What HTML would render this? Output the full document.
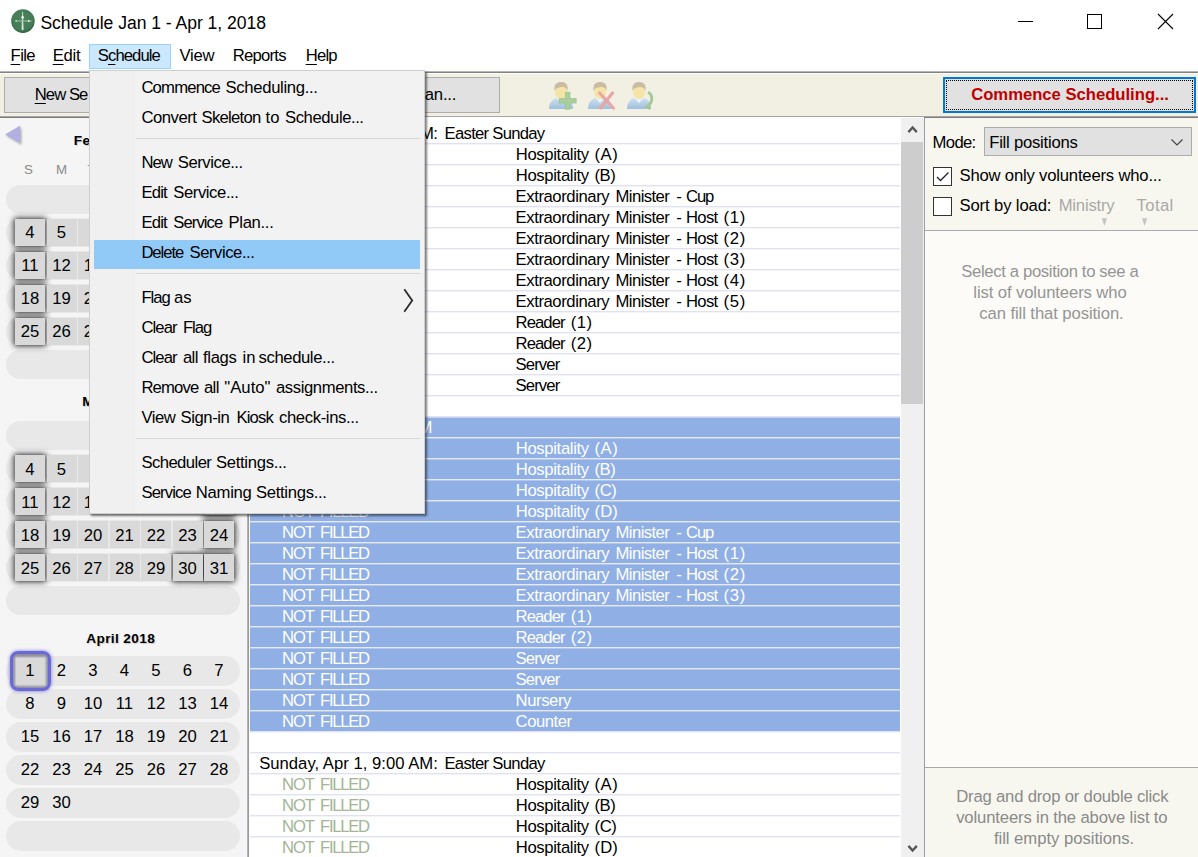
<!DOCTYPE html><html><head><meta charset="utf-8"><title>Schedule</title><style>
html,body{margin:0;padding:0;}
body{width:1198px;height:857px;overflow:hidden;background:#fff;font-family:"Liberation Sans", sans-serif;position:relative;}
div,span.t,svg{position:absolute;box-sizing:border-box;}
span.t{white-space:pre;}
u{text-decoration:underline;text-underline-offset:3px;text-decoration-thickness:1px;}
</style></head><body><div style="left:0px;top:0px;width:1198px;height:44px;background:#fff;"></div><svg style="left:10px;top:8px" width="26" height="26" viewBox="10 8 26 26">
<defs><radialGradient id="gi" cx="45%" cy="40%" r="60%"><stop offset="0" stop-color="#4a845c"/><stop offset="0.8" stop-color="#437b55"/><stop offset="1" stop-color="#2f6341"/></radialGradient></defs>
<circle cx="22.9" cy="21.1" r="11.8" fill="url(#gi)"/>
<path d="M22.6 11.8 L23.3 29.8 L21.9 29.8 Z" fill="#e4ece2" stroke="#e4ece2" stroke-width="0.5"/>
<path d="M15.2 21 H31.6" stroke="#a9c4ae" stroke-width="0.9" fill="none"/>
<circle cx="22.6" cy="17.3" r="1.25" fill="#fff"/>
<circle cx="16.2" cy="21" r="0.8" fill="#dce8dc"/><circle cx="28.7" cy="21" r="0.9" fill="#f0f5ee"/>
</svg><span class="t" style="left:40.40px;top:13px;font-size:17.6px;line-height:21px;color:#000;letter-spacing:-0.050px;">Schedule Jan 1 - Apr 1, 2018</span><svg style="left:1000px;top:0" width="198" height="44" viewBox="0 0 198 44" shape-rendering="crispEdges">
<path d="M18 21.5 H33" stroke="#000" stroke-width="1" fill="none"/>
<rect x="87.5" y="14.5" width="14" height="14" stroke="#000" stroke-width="1" fill="none"/>
<path d="M158 14 L173 29 M173 14 L158 29" stroke="#000" stroke-width="1.1" fill="none" shape-rendering="geometricPrecision"/>
</svg><div style="left:89px;top:44px;width:82px;height:25px;background:#cce8ff;border:1px solid #99d1ff;"></div><span class="t" style="left:10.60px;top:46px;font-size:16.67px;line-height:20px;color:#000;letter-spacing:-0.648px;"><u>F</u>ile</span><span class="t" style="left:52.70px;top:46px;font-size:16.67px;line-height:20px;color:#000;letter-spacing:-0.268px;"><u>E</u>dit</span><span class="t" style="left:97.80px;top:46px;font-size:16.67px;line-height:20px;color:#000;letter-spacing:-0.924px;">S<u>c</u>hedule</span><span class="t" style="left:179.50px;top:46px;font-size:16.67px;line-height:20px;color:#000;letter-spacing:-0.238px;">View</span><span class="t" style="left:232.70px;top:46px;font-size:16.67px;line-height:20px;color:#000;letter-spacing:-0.738px;">Reports</span><span class="t" style="left:305.70px;top:46px;font-size:16.67px;line-height:20px;color:#000;letter-spacing:-0.789px;"><u>H</u>elp</span><div style="left:0px;top:73px;width:1198px;height:45px;background:#f2f0e3;"></div><div style="left:0px;top:71px;width:1198px;height:1px;background:#b4b4b4;"></div><div style="left:0px;top:72px;width:1198px;height:1px;background:#828282;"></div><div style="left:0px;top:73px;width:1198px;height:1px;background:#fefefc;"></div><div style="left:0px;top:116px;width:1198px;height:1px;background:#a6a6a6;"></div><div style="left:0px;top:117px;width:1198px;height:1px;background:#7c7c7c;"></div><div style="left:4px;top:77px;width:166px;height:36px;background:#e1e1e1;border:1px solid #adadad;"></div><div style="left:169px;top:77px;width:166px;height:36px;background:#e1e1e1;border:1px solid #adadad;"></div><div style="left:334px;top:77px;width:166px;height:36px;background:#e1e1e1;border:1px solid #adadad;"></div><span class="t" style="left:34.70px;top:85px;font-size:16.67px;line-height:20px;color:#000;letter-spacing:-0.926px;"><u>N</u>ew Se</span><span class="t" style="left:202.20px;top:85px;font-size:16.67px;line-height:20px;color:#000;letter-spacing:-0.312px;"><u>E</u>dit Service...</span><span class="t" style="left:378.00px;top:85px;font-size:16.67px;line-height:20px;color:#000;letter-spacing:-0.197px;">Edit Plan...</span><svg style="left:548px;top:80px" width="36" height="32" viewBox="0 0 36 32">
<defs><linearGradient id="sh548" x1="0" y1="0" x2="0" y2="1"><stop offset="0" stop-color="#cfe0ee"/><stop offset="1" stop-color="#9fc0de"/></linearGradient></defs>
<path d="M1 29 C1 21 6 18.5 9 18 L17 18 C21 18.5 25 21 25 29 Z" fill="url(#sh548)"/>
<path d="M8.5 18 L13 23 L17.5 18 Z" fill="#eef3f6"/>
<ellipse cx="13" cy="12" rx="6" ry="7.2" fill="#f6e3a6"/>
<path d="M6.5 11 C5.5 4 9 2 13 2 C18 2 20.5 5 19.5 11 C18.5 7.5 16 6.5 13.5 7 C10 7.5 8 8 6.5 11 Z" fill="#c9bca2"/>
<path d="M17 17.2 H23.2 V11 H27.8 V17.2 H34 V21.8 H27.8 V28 H23.2 V21.8 H17 Z" fill="#a9cf9c" stroke="#8fbf84" stroke-width="0.6" transform="translate(-5.8,1.3)"/></svg><svg style="left:587px;top:80px" width="36" height="32" viewBox="0 0 36 32">
<defs><linearGradient id="sh587" x1="0" y1="0" x2="0" y2="1"><stop offset="0" stop-color="#cfe0ee"/><stop offset="1" stop-color="#9fc0de"/></linearGradient></defs>
<path d="M1 29 C1 21 6 18.5 9 18 L17 18 C21 18.5 25 21 25 29 Z" fill="url(#sh587)"/>
<path d="M8.5 18 L13 23 L17.5 18 Z" fill="#eef3f6"/>
<ellipse cx="13" cy="12" rx="6" ry="7.2" fill="#f6e3a6"/>
<path d="M6.5 11 C5.5 4 9 2 13 2 C18 2 20.5 5 19.5 11 C18.5 7.5 16 6.5 13.5 7 C10 7.5 8 8 6.5 11 Z" fill="#c9bca2"/>
<path d="M12.5 13 L26.5 28 M25.5 13 L13.5 28" stroke="#eaa6a6" stroke-width="3.2" fill="none" stroke-linecap="round"/></svg><svg style="left:626px;top:80px" width="36" height="32" viewBox="0 0 36 32">
<defs><linearGradient id="sh626" x1="0" y1="0" x2="0" y2="1"><stop offset="0" stop-color="#cfe0ee"/><stop offset="1" stop-color="#9fc0de"/></linearGradient></defs>
<path d="M1 29 C1 21 6 18.5 9 18 L17 18 C21 18.5 25 21 25 29 Z" fill="url(#sh626)"/>
<path d="M8.5 18 L13 23 L17.5 18 Z" fill="#eef3f6"/>
<ellipse cx="13" cy="12" rx="6" ry="7.2" fill="#f6e3a6"/>
<path d="M6.5 11 C5.5 4 9 2 13 2 C18 2 20.5 5 19.5 11 C18.5 7.5 16 6.5 13.5 7 C10 7.5 8 8 6.5 11 Z" fill="#c9bca2"/>
<path d="M22.5 11 C28.5 13 29.5 24 21.5 27.5 L20.5 25 C25.5 22.5 25.5 15.5 21.5 13.5 Z" fill="#a3c99a"/><path d="M17.5 27 L24.5 24.5 L24 30 Z" fill="#a3c99a"/></svg><div style="left:943px;top:77px;width:253px;height:36px;background:#e1e1e1;border:2px solid #0078d7;"></div><div style="left:946px;top:80px;width:247px;height:30px;border:1px dotted #000;"></div><span class="t" style="left:971.20px;top:85px;font-size:16.67px;line-height:20px;color:#c00000;font-weight:bold;letter-spacing:-0.017px;">Commence Scheduling...</span><div style="left:0px;top:118px;width:247px;height:739px;background:#f5f5f5;"></div><svg style="left:0px;top:120px" width="30" height="32" viewBox="0 0 30 32">
<defs><filter id="tb" x="-30%" y="-30%" width="160%" height="160%"><feGaussianBlur stdDeviation="1"/></filter></defs>
<path d="M6.5 16 L21.5 8 V25 Z" fill="#555" opacity="0.45" filter="url(#tb)"/>
<path d="M5 14.6 L20.2 5.4 V23 Z" fill="#b2b0e3"/></svg><span class="t" style="left:73.80px;top:133px;font-size:13.6px;line-height:16px;color:#000;font-weight:bold;letter-spacing:0.516px;text-shadow:1px 1px 1px rgba(0,0,0,0.18);">February 2018</span><span class="t" style="left:24.06px;top:162px;font-size:13.3px;line-height:16px;color:#8a8a8a;">S</span><span class="t" style="left:55.96px;top:162px;font-size:13.3px;line-height:16px;color:#8a8a8a;">M</span><span class="t" style="left:87.44px;top:162px;font-size:13.3px;line-height:16px;color:#8a8a8a;">T</span><span class="t" style="left:116.72px;top:162px;font-size:13.3px;line-height:16px;color:#8a8a8a;">W</span><span class="t" style="left:150.44px;top:162px;font-size:13.3px;line-height:16px;color:#8a8a8a;">T</span><span class="t" style="left:181.94px;top:162px;font-size:13.3px;line-height:16px;color:#8a8a8a;">F</span><span class="t" style="left:213.06px;top:162px;font-size:13.3px;line-height:16px;color:#8a8a8a;">S</span><div style="left:6px;top:184.9px;width:234px;height:29.5px;background:#e8e8e8;border-radius:15px;"></div><div style="left:6px;top:217.9px;width:234px;height:29.5px;background:#e8e8e8;border-radius:15px;"></div><div style="left:6px;top:250.9px;width:234px;height:29.5px;background:#e8e8e8;border-radius:15px;"></div><div style="left:6px;top:283.9px;width:234px;height:29.5px;background:#e8e8e8;border-radius:15px;"></div><div style="left:6px;top:316.9px;width:234px;height:29.5px;background:#e8e8e8;border-radius:15px;"></div><div style="left:6px;top:349.9px;width:234px;height:29.5px;background:#e8e8e8;border-radius:15px;"></div><div style="left:204.0px;top:186.4px;width:30px;height:27px;box-shadow:0 0 6px 1px rgba(0,0,0,0.8);background:#777;"></div><div style="left:15.0px;top:219.4px;width:30px;height:27px;box-shadow:0 0 6px 1px rgba(0,0,0,0.8);background:#777;"></div><div style="left:204.0px;top:219.4px;width:30px;height:27px;box-shadow:0 0 6px 1px rgba(0,0,0,0.8);background:#777;"></div><div style="left:15.0px;top:252.4px;width:30px;height:27px;box-shadow:0 0 6px 1px rgba(0,0,0,0.8);background:#777;"></div><div style="left:204.0px;top:252.4px;width:30px;height:27px;box-shadow:0 0 6px 1px rgba(0,0,0,0.8);background:#777;"></div><div style="left:15.0px;top:285.4px;width:30px;height:27px;box-shadow:0 0 6px 1px rgba(0,0,0,0.8);background:#777;"></div><div style="left:204.0px;top:285.4px;width:30px;height:27px;box-shadow:0 0 6px 1px rgba(0,0,0,0.8);background:#777;"></div><div style="left:15.0px;top:318.4px;width:30px;height:27px;box-shadow:0 0 6px 1px rgba(0,0,0,0.8);background:#777;"></div><div style="left:141.0px;top:186.4px;width:30px;height:27px;background:#d9d9d9;"></div><div style="left:172.5px;top:186.4px;width:30px;height:27px;background:#d9d9d9;"></div><div style="left:204.0px;top:186.4px;width:30px;height:27px;background:#d9d9d9;"></div><div style="left:15.0px;top:219.4px;width:30px;height:27px;background:#d9d9d9;"></div><span class="t" style="left:25.37px;top:223px;font-size:16.67px;line-height:20px;color:#000;">4</span><div style="left:46.5px;top:219.4px;width:30px;height:27px;background:#d9d9d9;"></div><span class="t" style="left:56.87px;top:223px;font-size:16.67px;line-height:20px;color:#000;">5</span><div style="left:78.0px;top:219.4px;width:30px;height:27px;background:#d9d9d9;"></div><div style="left:109.5px;top:219.4px;width:30px;height:27px;background:#d9d9d9;"></div><div style="left:141.0px;top:219.4px;width:30px;height:27px;background:#d9d9d9;"></div><div style="left:172.5px;top:219.4px;width:30px;height:27px;background:#d9d9d9;"></div><div style="left:204.0px;top:219.4px;width:30px;height:27px;background:#d9d9d9;"></div><div style="left:15.0px;top:252.4px;width:30px;height:27px;background:#d9d9d9;"></div><span class="t" style="left:21.35px;top:256px;font-size:16.67px;line-height:20px;color:#000;">11</span><div style="left:46.5px;top:252.4px;width:30px;height:27px;background:#d9d9d9;"></div><span class="t" style="left:52.23px;top:256px;font-size:16.67px;line-height:20px;color:#000;">12</span><div style="left:78.0px;top:252.4px;width:30px;height:27px;background:#d9d9d9;"></div><span class="t" style="left:83.73px;top:256px;font-size:16.67px;line-height:20px;color:#000;">13</span><div style="left:109.5px;top:252.4px;width:30px;height:27px;background:#d9d9d9;"></div><div style="left:141.0px;top:252.4px;width:30px;height:27px;background:#d9d9d9;"></div><div style="left:172.5px;top:252.4px;width:30px;height:27px;background:#d9d9d9;"></div><div style="left:204.0px;top:252.4px;width:30px;height:27px;background:#d9d9d9;"></div><div style="left:15.0px;top:285.4px;width:30px;height:27px;background:#d9d9d9;"></div><span class="t" style="left:20.73px;top:289px;font-size:16.67px;line-height:20px;color:#000;">18</span><div style="left:46.5px;top:285.4px;width:30px;height:27px;background:#d9d9d9;"></div><span class="t" style="left:52.23px;top:289px;font-size:16.67px;line-height:20px;color:#000;">19</span><div style="left:78.0px;top:285.4px;width:30px;height:27px;background:#d9d9d9;"></div><span class="t" style="left:83.73px;top:289px;font-size:16.67px;line-height:20px;color:#000;">20</span><div style="left:109.5px;top:285.4px;width:30px;height:27px;background:#d9d9d9;"></div><div style="left:141.0px;top:285.4px;width:30px;height:27px;background:#d9d9d9;"></div><div style="left:172.5px;top:285.4px;width:30px;height:27px;background:#d9d9d9;"></div><div style="left:204.0px;top:285.4px;width:30px;height:27px;background:#d9d9d9;"></div><div style="left:15.0px;top:318.4px;width:30px;height:27px;background:#d9d9d9;"></div><span class="t" style="left:20.73px;top:322px;font-size:16.67px;line-height:20px;color:#000;">25</span><div style="left:46.5px;top:318.4px;width:30px;height:27px;background:#d9d9d9;"></div><span class="t" style="left:52.23px;top:322px;font-size:16.67px;line-height:20px;color:#000;">26</span><div style="left:78.0px;top:318.4px;width:30px;height:27px;background:#d9d9d9;"></div><span class="t" style="left:83.73px;top:322px;font-size:16.67px;line-height:20px;color:#000;">27</span><div style="left:109.5px;top:318.4px;width:30px;height:27px;background:#d9d9d9;"></div><span class="t" style="left:82.30px;top:394px;font-size:13.6px;line-height:16px;color:#000;font-weight:bold;letter-spacing:0.371px;text-shadow:1px 1px 1px rgba(0,0,0,0.18);">March 2018</span><div style="left:6px;top:420.8px;width:234px;height:29.5px;background:#e8e8e8;border-radius:15px;"></div><div style="left:6px;top:453.8px;width:234px;height:29.5px;background:#e8e8e8;border-radius:15px;"></div><div style="left:6px;top:486.8px;width:234px;height:29.5px;background:#e8e8e8;border-radius:15px;"></div><div style="left:6px;top:519.8px;width:234px;height:29.5px;background:#e8e8e8;border-radius:15px;"></div><div style="left:6px;top:552.8px;width:234px;height:29.5px;background:#e8e8e8;border-radius:15px;"></div><div style="left:6px;top:585.8px;width:234px;height:29.5px;background:#e8e8e8;border-radius:15px;"></div><div style="left:204.0px;top:422.3px;width:30px;height:27px;box-shadow:0 0 6px 1px rgba(0,0,0,0.8);background:#777;"></div><div style="left:15.0px;top:455.3px;width:30px;height:27px;box-shadow:0 0 6px 1px rgba(0,0,0,0.8);background:#777;"></div><div style="left:204.0px;top:455.3px;width:30px;height:27px;box-shadow:0 0 6px 1px rgba(0,0,0,0.8);background:#777;"></div><div style="left:15.0px;top:488.3px;width:30px;height:27px;box-shadow:0 0 6px 1px rgba(0,0,0,0.8);background:#777;"></div><div style="left:204.0px;top:488.3px;width:30px;height:27px;box-shadow:0 0 6px 1px rgba(0,0,0,0.8);background:#777;"></div><div style="left:15.0px;top:521.3px;width:30px;height:27px;box-shadow:0 0 6px 1px rgba(0,0,0,0.8);background:#777;"></div><div style="left:204.0px;top:521.3px;width:30px;height:27px;box-shadow:0 0 6px 1px rgba(0,0,0,0.8);background:#777;"></div><div style="left:15.0px;top:554.3px;width:30px;height:27px;box-shadow:0 0 6px 1px rgba(0,0,0,0.8);background:#777;"></div><div style="left:172.5px;top:554.3px;width:30px;height:27px;box-shadow:0 0 6px 1px rgba(0,0,0,0.8);background:#777;"></div><div style="left:204.0px;top:554.3px;width:30px;height:27px;box-shadow:0 0 6px 1px rgba(0,0,0,0.8);background:#777;"></div><div style="left:141.0px;top:422.3px;width:30px;height:27px;background:#d9d9d9;"></div><div style="left:172.5px;top:422.3px;width:30px;height:27px;background:#d9d9d9;"></div><div style="left:204.0px;top:422.3px;width:30px;height:27px;background:#d9d9d9;"></div><div style="left:15.0px;top:455.3px;width:30px;height:27px;background:#d9d9d9;"></div><span class="t" style="left:25.37px;top:460px;font-size:16.67px;line-height:20px;color:#000;">4</span><div style="left:46.5px;top:455.3px;width:30px;height:27px;background:#d9d9d9;"></div><span class="t" style="left:56.87px;top:460px;font-size:16.67px;line-height:20px;color:#000;">5</span><div style="left:78.0px;top:455.3px;width:30px;height:27px;background:#d9d9d9;"></div><div style="left:109.5px;top:455.3px;width:30px;height:27px;background:#d9d9d9;"></div><div style="left:141.0px;top:455.3px;width:30px;height:27px;background:#d9d9d9;"></div><div style="left:172.5px;top:455.3px;width:30px;height:27px;background:#d9d9d9;"></div><div style="left:204.0px;top:455.3px;width:30px;height:27px;background:#d9d9d9;"></div><div style="left:15.0px;top:488.3px;width:30px;height:27px;background:#d9d9d9;"></div><span class="t" style="left:21.35px;top:493px;font-size:16.67px;line-height:20px;color:#000;">11</span><div style="left:46.5px;top:488.3px;width:30px;height:27px;background:#d9d9d9;"></div><span class="t" style="left:52.23px;top:493px;font-size:16.67px;line-height:20px;color:#000;">12</span><div style="left:78.0px;top:488.3px;width:30px;height:27px;background:#d9d9d9;"></div><span class="t" style="left:83.73px;top:493px;font-size:16.67px;line-height:20px;color:#000;">13</span><div style="left:109.5px;top:488.3px;width:30px;height:27px;background:#d9d9d9;"></div><div style="left:141.0px;top:488.3px;width:30px;height:27px;background:#d9d9d9;"></div><div style="left:172.5px;top:488.3px;width:30px;height:27px;background:#d9d9d9;"></div><div style="left:204.0px;top:488.3px;width:30px;height:27px;background:#d9d9d9;"></div><div style="left:15.0px;top:521.3px;width:30px;height:27px;background:#d9d9d9;"></div><span class="t" style="left:20.73px;top:526px;font-size:16.67px;line-height:20px;color:#000;">18</span><div style="left:46.5px;top:521.3px;width:30px;height:27px;background:#d9d9d9;"></div><span class="t" style="left:52.23px;top:526px;font-size:16.67px;line-height:20px;color:#000;">19</span><div style="left:78.0px;top:521.3px;width:30px;height:27px;background:#d9d9d9;"></div><span class="t" style="left:83.73px;top:526px;font-size:16.67px;line-height:20px;color:#000;">20</span><div style="left:109.5px;top:521.3px;width:30px;height:27px;background:#d9d9d9;"></div><span class="t" style="left:115.23px;top:526px;font-size:16.67px;line-height:20px;color:#000;">21</span><div style="left:141.0px;top:521.3px;width:30px;height:27px;background:#d9d9d9;"></div><span class="t" style="left:146.73px;top:526px;font-size:16.67px;line-height:20px;color:#000;">22</span><div style="left:172.5px;top:521.3px;width:30px;height:27px;background:#d9d9d9;"></div><span class="t" style="left:178.23px;top:526px;font-size:16.67px;line-height:20px;color:#000;">23</span><div style="left:204.0px;top:521.3px;width:30px;height:27px;background:#d9d9d9;"></div><span class="t" style="left:209.73px;top:526px;font-size:16.67px;line-height:20px;color:#000;">24</span><div style="left:15.0px;top:554.3px;width:30px;height:27px;background:#d9d9d9;"></div><span class="t" style="left:20.73px;top:559px;font-size:16.67px;line-height:20px;color:#000;">25</span><div style="left:46.5px;top:554.3px;width:30px;height:27px;background:#d9d9d9;"></div><span class="t" style="left:52.23px;top:559px;font-size:16.67px;line-height:20px;color:#000;">26</span><div style="left:78.0px;top:554.3px;width:30px;height:27px;background:#d9d9d9;"></div><span class="t" style="left:83.73px;top:559px;font-size:16.67px;line-height:20px;color:#000;">27</span><div style="left:109.5px;top:554.3px;width:30px;height:27px;background:#d9d9d9;"></div><span class="t" style="left:115.23px;top:559px;font-size:16.67px;line-height:20px;color:#000;">28</span><div style="left:141.0px;top:554.3px;width:30px;height:27px;background:#d9d9d9;"></div><span class="t" style="left:146.73px;top:559px;font-size:16.67px;line-height:20px;color:#000;">29</span><div style="left:172.5px;top:554.3px;width:30px;height:27px;background:#d9d9d9;"></div><span class="t" style="left:178.23px;top:559px;font-size:16.67px;line-height:20px;color:#000;">30</span><div style="left:204.0px;top:554.3px;width:30px;height:27px;background:#d9d9d9;"></div><span class="t" style="left:209.73px;top:559px;font-size:16.67px;line-height:20px;color:#000;">31</span><span class="t" style="left:86.30px;top:631px;font-size:13.6px;line-height:16px;color:#000;font-weight:bold;letter-spacing:0.380px;text-shadow:1px 1px 1px rgba(0,0,0,0.18);">April 2018</span><div style="left:6px;top:656.2px;width:234px;height:29.5px;background:#e8e8e8;border-radius:15px;"></div><div style="left:6px;top:689.2px;width:234px;height:29.5px;background:#e8e8e8;border-radius:15px;"></div><div style="left:6px;top:722.2px;width:234px;height:29.5px;background:#e8e8e8;border-radius:15px;"></div><div style="left:6px;top:755.2px;width:234px;height:29.5px;background:#e8e8e8;border-radius:15px;"></div><div style="left:6px;top:788.2px;width:234px;height:29.5px;background:#e8e8e8;border-radius:15px;"></div><div style="left:6px;top:821.2px;width:234px;height:29.5px;background:#e8e8e8;border-radius:15px;"></div><div style="left:11.0px;top:653.2px;width:38px;height:35.5px;overflow:hidden;border-radius:7px;background:#8d8d9e;"><div style="left:5px;top:4.5px;width:28px;height:26.5px;background:#d9d9d9;box-shadow:0 0 2px 1.5px #d9d9d9;"></div></div><div style="left:9.5px;top:651.4000000000001px;width:41px;height:39.2px;border:3.2px solid #6b69d6;border-radius:8px;box-shadow:0 0 3px 1px rgba(107,105,214,0.55);"></div><span class="t" style="left:25.37px;top:661px;font-size:16.67px;line-height:20px;color:#000;">1</span><span class="t" style="left:56.87px;top:661px;font-size:16.67px;line-height:20px;color:#000;">2</span><span class="t" style="left:88.37px;top:661px;font-size:16.67px;line-height:20px;color:#000;">3</span><span class="t" style="left:119.87px;top:661px;font-size:16.67px;line-height:20px;color:#000;">4</span><span class="t" style="left:151.37px;top:661px;font-size:16.67px;line-height:20px;color:#000;">5</span><span class="t" style="left:182.87px;top:661px;font-size:16.67px;line-height:20px;color:#000;">6</span><span class="t" style="left:214.37px;top:661px;font-size:16.67px;line-height:20px;color:#000;">7</span><span class="t" style="left:25.37px;top:694px;font-size:16.67px;line-height:20px;color:#000;">8</span><span class="t" style="left:56.87px;top:694px;font-size:16.67px;line-height:20px;color:#000;">9</span><span class="t" style="left:83.73px;top:694px;font-size:16.67px;line-height:20px;color:#000;">10</span><span class="t" style="left:115.85px;top:694px;font-size:16.67px;line-height:20px;color:#000;">11</span><span class="t" style="left:146.73px;top:694px;font-size:16.67px;line-height:20px;color:#000;">12</span><span class="t" style="left:178.23px;top:694px;font-size:16.67px;line-height:20px;color:#000;">13</span><span class="t" style="left:209.73px;top:694px;font-size:16.67px;line-height:20px;color:#000;">14</span><span class="t" style="left:20.73px;top:727px;font-size:16.67px;line-height:20px;color:#000;">15</span><span class="t" style="left:52.23px;top:727px;font-size:16.67px;line-height:20px;color:#000;">16</span><span class="t" style="left:83.73px;top:727px;font-size:16.67px;line-height:20px;color:#000;">17</span><span class="t" style="left:115.23px;top:727px;font-size:16.67px;line-height:20px;color:#000;">18</span><span class="t" style="left:146.73px;top:727px;font-size:16.67px;line-height:20px;color:#000;">19</span><span class="t" style="left:178.23px;top:727px;font-size:16.67px;line-height:20px;color:#000;">20</span><span class="t" style="left:209.73px;top:727px;font-size:16.67px;line-height:20px;color:#000;">21</span><span class="t" style="left:20.73px;top:760px;font-size:16.67px;line-height:20px;color:#000;">22</span><span class="t" style="left:52.23px;top:760px;font-size:16.67px;line-height:20px;color:#000;">23</span><span class="t" style="left:83.73px;top:760px;font-size:16.67px;line-height:20px;color:#000;">24</span><span class="t" style="left:115.23px;top:760px;font-size:16.67px;line-height:20px;color:#000;">25</span><span class="t" style="left:146.73px;top:760px;font-size:16.67px;line-height:20px;color:#000;">26</span><span class="t" style="left:178.23px;top:760px;font-size:16.67px;line-height:20px;color:#000;">27</span><span class="t" style="left:209.73px;top:760px;font-size:16.67px;line-height:20px;color:#000;">28</span><span class="t" style="left:20.73px;top:793px;font-size:16.67px;line-height:20px;color:#000;">29</span><span class="t" style="left:52.23px;top:793px;font-size:16.67px;line-height:20px;color:#000;">30</span><div style="left:247px;top:118px;width:1px;height:739px;background:#b2b2ba;"></div><div style="left:248px;top:118px;width:1px;height:739px;background:#9a9aa3;"></div><div style="left:249px;top:117px;width:675px;height:740px;background:#fff;"></div><div style="left:249px;top:118px;width:1px;height:739px;background:#fbfaf5;"></div><div style="left:250px;top:417px;width:650px;height:314px;background:#90afe5;"></div><div style="left:250px;top:143px;width:650px;height:1px;background:#e1e1f3;"></div><div style="left:250px;top:144px;width:650px;height:1px;background:#f3f3fa;"></div><div style="left:250px;top:164px;width:650px;height:1px;background:#e1e1f3;"></div><div style="left:250px;top:165px;width:650px;height:1px;background:#f3f3fa;"></div><div style="left:250px;top:185px;width:650px;height:1px;background:#e1e1f3;"></div><div style="left:250px;top:186px;width:650px;height:1px;background:#f3f3fa;"></div><div style="left:250px;top:206px;width:650px;height:1px;background:#e1e1f3;"></div><div style="left:250px;top:207px;width:650px;height:1px;background:#f3f3fa;"></div><div style="left:250px;top:227px;width:650px;height:1px;background:#e1e1f3;"></div><div style="left:250px;top:228px;width:650px;height:1px;background:#f3f3fa;"></div><div style="left:250px;top:248px;width:650px;height:1px;background:#e1e1f3;"></div><div style="left:250px;top:249px;width:650px;height:1px;background:#f3f3fa;"></div><div style="left:250px;top:269px;width:650px;height:1px;background:#e1e1f3;"></div><div style="left:250px;top:270px;width:650px;height:1px;background:#f3f3fa;"></div><div style="left:250px;top:290px;width:650px;height:1px;background:#e1e1f3;"></div><div style="left:250px;top:291px;width:650px;height:1px;background:#f3f3fa;"></div><div style="left:250px;top:311px;width:650px;height:1px;background:#e1e1f3;"></div><div style="left:250px;top:312px;width:650px;height:1px;background:#f3f3fa;"></div><div style="left:250px;top:332px;width:650px;height:1px;background:#e1e1f3;"></div><div style="left:250px;top:333px;width:650px;height:1px;background:#f3f3fa;"></div><div style="left:250px;top:353px;width:650px;height:1px;background:#e1e1f3;"></div><div style="left:250px;top:354px;width:650px;height:1px;background:#f3f3fa;"></div><div style="left:250px;top:374px;width:650px;height:1px;background:#e1e1f3;"></div><div style="left:250px;top:375px;width:650px;height:1px;background:#f3f3fa;"></div><div style="left:250px;top:395px;width:650px;height:1px;background:#e1e1f3;"></div><div style="left:250px;top:396px;width:650px;height:1px;background:#f3f3fa;"></div><div style="left:250px;top:416px;width:650px;height:1px;background:#e1e1f3;"></div><div style="left:250px;top:417px;width:650px;height:1px;background:#c6d3f1;"></div><div style="left:250px;top:437px;width:650px;height:1px;background:#e6e9f8;"></div><div style="left:250px;top:438px;width:650px;height:1px;background:#b3c6ec;"></div><div style="left:250px;top:458px;width:650px;height:1px;background:#e6e9f8;"></div><div style="left:250px;top:459px;width:650px;height:1px;background:#b3c6ec;"></div><div style="left:250px;top:479px;width:650px;height:1px;background:#e6e9f8;"></div><div style="left:250px;top:480px;width:650px;height:1px;background:#b3c6ec;"></div><div style="left:250px;top:500px;width:650px;height:1px;background:#e6e9f8;"></div><div style="left:250px;top:501px;width:650px;height:1px;background:#b3c6ec;"></div><div style="left:250px;top:521px;width:650px;height:1px;background:#e6e9f8;"></div><div style="left:250px;top:522px;width:650px;height:1px;background:#b3c6ec;"></div><div style="left:250px;top:542px;width:650px;height:1px;background:#e6e9f8;"></div><div style="left:250px;top:543px;width:650px;height:1px;background:#b3c6ec;"></div><div style="left:250px;top:563px;width:650px;height:1px;background:#e6e9f8;"></div><div style="left:250px;top:564px;width:650px;height:1px;background:#b3c6ec;"></div><div style="left:250px;top:584px;width:650px;height:1px;background:#e6e9f8;"></div><div style="left:250px;top:585px;width:650px;height:1px;background:#b3c6ec;"></div><div style="left:250px;top:605px;width:650px;height:1px;background:#e6e9f8;"></div><div style="left:250px;top:606px;width:650px;height:1px;background:#b3c6ec;"></div><div style="left:250px;top:626px;width:650px;height:1px;background:#e6e9f8;"></div><div style="left:250px;top:627px;width:650px;height:1px;background:#b3c6ec;"></div><div style="left:250px;top:647px;width:650px;height:1px;background:#e6e9f8;"></div><div style="left:250px;top:648px;width:650px;height:1px;background:#b3c6ec;"></div><div style="left:250px;top:668px;width:650px;height:1px;background:#e6e9f8;"></div><div style="left:250px;top:669px;width:650px;height:1px;background:#b3c6ec;"></div><div style="left:250px;top:689px;width:650px;height:1px;background:#e6e9f8;"></div><div style="left:250px;top:690px;width:650px;height:1px;background:#b3c6ec;"></div><div style="left:250px;top:710px;width:650px;height:1px;background:#e6e9f8;"></div><div style="left:250px;top:711px;width:650px;height:1px;background:#b3c6ec;"></div><div style="left:250px;top:731px;width:650px;height:1px;background:#e1e1f3;"></div><div style="left:250px;top:732px;width:650px;height:1px;background:#f3f3fa;"></div><div style="left:250px;top:752px;width:650px;height:1px;background:#e1e1f3;"></div><div style="left:250px;top:753px;width:650px;height:1px;background:#f3f3fa;"></div><div style="left:250px;top:773px;width:650px;height:1px;background:#e1e1f3;"></div><div style="left:250px;top:774px;width:650px;height:1px;background:#f3f3fa;"></div><div style="left:250px;top:794px;width:650px;height:1px;background:#e1e1f3;"></div><div style="left:250px;top:795px;width:650px;height:1px;background:#f3f3fa;"></div><div style="left:250px;top:815px;width:650px;height:1px;background:#e1e1f3;"></div><div style="left:250px;top:816px;width:650px;height:1px;background:#f3f3fa;"></div><div style="left:250px;top:836px;width:650px;height:1px;background:#e1e1f3;"></div><div style="left:250px;top:837px;width:650px;height:1px;background:#f3f3fa;"></div><span class="t" style="left:420.00px;top:124px;font-size:16.67px;line-height:20px;color:#000;letter-spacing:-0.716px;">M:</span><span class="t" style="left:444.60px;top:124px;font-size:16.67px;line-height:20px;color:#000;letter-spacing:-0.722px;">Easter Sunday</span><span class="t" style="left:281.90px;top:145px;font-size:16.67px;line-height:20px;color:#a3b596;letter-spacing:-1.036px;">NOT</span><span class="t" style="left:320.00px;top:145px;font-size:16.67px;line-height:20px;color:#a3b596;letter-spacing:-1.274px;">FILLED</span><span class="t" style="left:515.70px;top:145px;font-size:16.67px;line-height:20px;color:#000;letter-spacing:-0.334px;">Hospitality</span><span class="t" style="left:594.50px;top:145px;font-size:16.67px;line-height:20px;color:#000;letter-spacing:0.548px;">(A)</span><span class="t" style="left:281.90px;top:166px;font-size:16.67px;line-height:20px;color:#a3b596;letter-spacing:-1.036px;">NOT</span><span class="t" style="left:320.00px;top:166px;font-size:16.67px;line-height:20px;color:#a3b596;letter-spacing:-1.274px;">FILLED</span><span class="t" style="left:515.70px;top:166px;font-size:16.67px;line-height:20px;color:#000;letter-spacing:-0.334px;">Hospitality</span><span class="t" style="left:594.50px;top:166px;font-size:16.67px;line-height:20px;color:#000;letter-spacing:-0.452px;">(B)</span><span class="t" style="left:281.90px;top:187px;font-size:16.67px;line-height:20px;color:#a3b596;letter-spacing:-1.036px;">NOT</span><span class="t" style="left:320.00px;top:187px;font-size:16.67px;line-height:20px;color:#a3b596;letter-spacing:-1.274px;">FILLED</span><span class="t" style="left:515.60px;top:187px;font-size:16.67px;line-height:20px;color:#000;letter-spacing:-0.422px;">Extraordinary</span><span class="t" style="left:615.60px;top:187px;font-size:16.67px;line-height:20px;color:#000;letter-spacing:-0.602px;">Minister</span><span class="t" style="left:676.20px;top:187px;font-size:16.67px;line-height:20px;color:#000;">-</span><span class="t" style="left:686.00px;top:187px;font-size:16.67px;line-height:20px;color:#000;letter-spacing:-1.131px;">Cup</span><span class="t" style="left:281.90px;top:208px;font-size:16.67px;line-height:20px;color:#a3b596;letter-spacing:-1.036px;">NOT</span><span class="t" style="left:320.00px;top:208px;font-size:16.67px;line-height:20px;color:#a3b596;letter-spacing:-1.274px;">FILLED</span><span class="t" style="left:515.60px;top:208px;font-size:16.67px;line-height:20px;color:#000;letter-spacing:-0.422px;">Extraordinary</span><span class="t" style="left:615.60px;top:208px;font-size:16.67px;line-height:20px;color:#000;letter-spacing:-0.602px;">Minister</span><span class="t" style="left:676.20px;top:208px;font-size:16.67px;line-height:20px;color:#000;">-</span><span class="t" style="left:686.00px;top:208px;font-size:16.67px;line-height:20px;color:#000;letter-spacing:-0.683px;">Host</span><span class="t" style="left:723.50px;top:208px;font-size:16.67px;line-height:20px;color:#000;letter-spacing:0.670px;">(1)</span><span class="t" style="left:281.90px;top:229px;font-size:16.67px;line-height:20px;color:#a3b596;letter-spacing:-1.036px;">NOT</span><span class="t" style="left:320.00px;top:229px;font-size:16.67px;line-height:20px;color:#a3b596;letter-spacing:-1.274px;">FILLED</span><span class="t" style="left:515.60px;top:229px;font-size:16.67px;line-height:20px;color:#000;letter-spacing:-0.422px;">Extraordinary</span><span class="t" style="left:615.60px;top:229px;font-size:16.67px;line-height:20px;color:#000;letter-spacing:-0.602px;">Minister</span><span class="t" style="left:676.20px;top:229px;font-size:16.67px;line-height:20px;color:#000;">-</span><span class="t" style="left:686.00px;top:229px;font-size:16.67px;line-height:20px;color:#000;letter-spacing:-0.683px;">Host</span><span class="t" style="left:723.50px;top:229px;font-size:16.67px;line-height:20px;color:#000;letter-spacing:0.670px;">(2)</span><span class="t" style="left:281.90px;top:250px;font-size:16.67px;line-height:20px;color:#a3b596;letter-spacing:-1.036px;">NOT</span><span class="t" style="left:320.00px;top:250px;font-size:16.67px;line-height:20px;color:#a3b596;letter-spacing:-1.274px;">FILLED</span><span class="t" style="left:515.60px;top:250px;font-size:16.67px;line-height:20px;color:#000;letter-spacing:-0.422px;">Extraordinary</span><span class="t" style="left:615.60px;top:250px;font-size:16.67px;line-height:20px;color:#000;letter-spacing:-0.602px;">Minister</span><span class="t" style="left:676.20px;top:250px;font-size:16.67px;line-height:20px;color:#000;">-</span><span class="t" style="left:686.00px;top:250px;font-size:16.67px;line-height:20px;color:#000;letter-spacing:-0.683px;">Host</span><span class="t" style="left:723.50px;top:250px;font-size:16.67px;line-height:20px;color:#000;letter-spacing:0.670px;">(3)</span><span class="t" style="left:281.90px;top:271px;font-size:16.67px;line-height:20px;color:#a3b596;letter-spacing:-1.036px;">NOT</span><span class="t" style="left:320.00px;top:271px;font-size:16.67px;line-height:20px;color:#a3b596;letter-spacing:-1.274px;">FILLED</span><span class="t" style="left:515.60px;top:271px;font-size:16.67px;line-height:20px;color:#000;letter-spacing:-0.422px;">Extraordinary</span><span class="t" style="left:615.60px;top:271px;font-size:16.67px;line-height:20px;color:#000;letter-spacing:-0.602px;">Minister</span><span class="t" style="left:676.20px;top:271px;font-size:16.67px;line-height:20px;color:#000;">-</span><span class="t" style="left:686.00px;top:271px;font-size:16.67px;line-height:20px;color:#000;letter-spacing:-0.683px;">Host</span><span class="t" style="left:723.50px;top:271px;font-size:16.67px;line-height:20px;color:#000;letter-spacing:0.670px;">(4)</span><span class="t" style="left:281.90px;top:292px;font-size:16.67px;line-height:20px;color:#a3b596;letter-spacing:-1.036px;">NOT</span><span class="t" style="left:320.00px;top:292px;font-size:16.67px;line-height:20px;color:#a3b596;letter-spacing:-1.274px;">FILLED</span><span class="t" style="left:515.60px;top:292px;font-size:16.67px;line-height:20px;color:#000;letter-spacing:-0.422px;">Extraordinary</span><span class="t" style="left:615.60px;top:292px;font-size:16.67px;line-height:20px;color:#000;letter-spacing:-0.602px;">Minister</span><span class="t" style="left:676.20px;top:292px;font-size:16.67px;line-height:20px;color:#000;">-</span><span class="t" style="left:686.00px;top:292px;font-size:16.67px;line-height:20px;color:#000;letter-spacing:-0.683px;">Host</span><span class="t" style="left:723.50px;top:292px;font-size:16.67px;line-height:20px;color:#000;letter-spacing:0.670px;">(5)</span><span class="t" style="left:281.90px;top:313px;font-size:16.67px;line-height:20px;color:#a3b596;letter-spacing:-1.036px;">NOT</span><span class="t" style="left:320.00px;top:313px;font-size:16.67px;line-height:20px;color:#a3b596;letter-spacing:-1.274px;">FILLED</span><span class="t" style="left:515.60px;top:313px;font-size:16.67px;line-height:20px;color:#000;letter-spacing:-0.928px;">Reader</span><span class="t" style="left:570.80px;top:313px;font-size:16.67px;line-height:20px;color:#000;letter-spacing:0.420px;">(1)</span><span class="t" style="left:281.90px;top:334px;font-size:16.67px;line-height:20px;color:#a3b596;letter-spacing:-1.036px;">NOT</span><span class="t" style="left:320.00px;top:334px;font-size:16.67px;line-height:20px;color:#a3b596;letter-spacing:-1.274px;">FILLED</span><span class="t" style="left:515.60px;top:334px;font-size:16.67px;line-height:20px;color:#000;letter-spacing:-0.928px;">Reader</span><span class="t" style="left:570.80px;top:334px;font-size:16.67px;line-height:20px;color:#000;letter-spacing:0.420px;">(2)</span><span class="t" style="left:281.90px;top:355px;font-size:16.67px;line-height:20px;color:#a3b596;letter-spacing:-1.036px;">NOT</span><span class="t" style="left:320.00px;top:355px;font-size:16.67px;line-height:20px;color:#a3b596;letter-spacing:-1.274px;">FILLED</span><span class="t" style="left:515.60px;top:355px;font-size:16.67px;line-height:20px;color:#000;letter-spacing:-0.892px;">Server</span><span class="t" style="left:281.90px;top:376px;font-size:16.67px;line-height:20px;color:#a3b596;letter-spacing:-1.036px;">NOT</span><span class="t" style="left:320.00px;top:376px;font-size:16.67px;line-height:20px;color:#a3b596;letter-spacing:-1.274px;">FILLED</span><span class="t" style="left:515.60px;top:376px;font-size:16.67px;line-height:20px;color:#000;letter-spacing:-0.892px;">Server</span><span class="t" style="left:259.20px;top:418px;font-size:16.67px;line-height:20px;color:#fff;letter-spacing:-0.028px;">Sunday, Apr 1, 8:00 AM</span><span class="t" style="left:281.90px;top:439px;font-size:16.67px;line-height:20px;color:#fff;letter-spacing:-1.036px;">NOT</span><span class="t" style="left:320.00px;top:439px;font-size:16.67px;line-height:20px;color:#fff;letter-spacing:-1.274px;">FILLED</span><span class="t" style="left:515.70px;top:439px;font-size:16.67px;line-height:20px;color:#fff;letter-spacing:-0.334px;">Hospitality</span><span class="t" style="left:594.50px;top:439px;font-size:16.67px;line-height:20px;color:#fff;letter-spacing:0.548px;">(A)</span><span class="t" style="left:281.90px;top:460px;font-size:16.67px;line-height:20px;color:#fff;letter-spacing:-1.036px;">NOT</span><span class="t" style="left:320.00px;top:460px;font-size:16.67px;line-height:20px;color:#fff;letter-spacing:-1.274px;">FILLED</span><span class="t" style="left:515.70px;top:460px;font-size:16.67px;line-height:20px;color:#fff;letter-spacing:-0.334px;">Hospitality</span><span class="t" style="left:594.50px;top:460px;font-size:16.67px;line-height:20px;color:#fff;letter-spacing:-0.452px;">(B)</span><span class="t" style="left:281.90px;top:481px;font-size:16.67px;line-height:20px;color:#fff;letter-spacing:-1.036px;">NOT</span><span class="t" style="left:320.00px;top:481px;font-size:16.67px;line-height:20px;color:#fff;letter-spacing:-1.274px;">FILLED</span><span class="t" style="left:515.70px;top:481px;font-size:16.67px;line-height:20px;color:#fff;letter-spacing:-0.334px;">Hospitality</span><span class="t" style="left:594.50px;top:481px;font-size:16.67px;line-height:20px;color:#fff;letter-spacing:-0.363px;">(C)</span><span class="t" style="left:281.90px;top:502px;font-size:16.67px;line-height:20px;color:#fff;letter-spacing:-1.036px;">NOT</span><span class="t" style="left:320.00px;top:502px;font-size:16.67px;line-height:20px;color:#fff;letter-spacing:-1.274px;">FILLED</span><span class="t" style="left:515.70px;top:502px;font-size:16.67px;line-height:20px;color:#fff;letter-spacing:-0.334px;">Hospitality</span><span class="t" style="left:594.50px;top:502px;font-size:16.67px;line-height:20px;color:#fff;letter-spacing:0.137px;">(D)</span><span class="t" style="left:281.90px;top:523px;font-size:16.67px;line-height:20px;color:#fff;letter-spacing:-1.036px;">NOT</span><span class="t" style="left:320.00px;top:523px;font-size:16.67px;line-height:20px;color:#fff;letter-spacing:-1.274px;">FILLED</span><span class="t" style="left:515.60px;top:523px;font-size:16.67px;line-height:20px;color:#fff;letter-spacing:-0.422px;">Extraordinary</span><span class="t" style="left:615.60px;top:523px;font-size:16.67px;line-height:20px;color:#fff;letter-spacing:-0.602px;">Minister</span><span class="t" style="left:676.20px;top:523px;font-size:16.67px;line-height:20px;color:#fff;">-</span><span class="t" style="left:686.00px;top:523px;font-size:16.67px;line-height:20px;color:#fff;letter-spacing:-1.131px;">Cup</span><span class="t" style="left:281.90px;top:544px;font-size:16.67px;line-height:20px;color:#fff;letter-spacing:-1.036px;">NOT</span><span class="t" style="left:320.00px;top:544px;font-size:16.67px;line-height:20px;color:#fff;letter-spacing:-1.274px;">FILLED</span><span class="t" style="left:515.60px;top:544px;font-size:16.67px;line-height:20px;color:#fff;letter-spacing:-0.422px;">Extraordinary</span><span class="t" style="left:615.60px;top:544px;font-size:16.67px;line-height:20px;color:#fff;letter-spacing:-0.602px;">Minister</span><span class="t" style="left:676.20px;top:544px;font-size:16.67px;line-height:20px;color:#fff;">-</span><span class="t" style="left:686.00px;top:544px;font-size:16.67px;line-height:20px;color:#fff;letter-spacing:-0.683px;">Host</span><span class="t" style="left:723.50px;top:544px;font-size:16.67px;line-height:20px;color:#fff;letter-spacing:0.670px;">(1)</span><span class="t" style="left:281.90px;top:565px;font-size:16.67px;line-height:20px;color:#fff;letter-spacing:-1.036px;">NOT</span><span class="t" style="left:320.00px;top:565px;font-size:16.67px;line-height:20px;color:#fff;letter-spacing:-1.274px;">FILLED</span><span class="t" style="left:515.60px;top:565px;font-size:16.67px;line-height:20px;color:#fff;letter-spacing:-0.422px;">Extraordinary</span><span class="t" style="left:615.60px;top:565px;font-size:16.67px;line-height:20px;color:#fff;letter-spacing:-0.602px;">Minister</span><span class="t" style="left:676.20px;top:565px;font-size:16.67px;line-height:20px;color:#fff;">-</span><span class="t" style="left:686.00px;top:565px;font-size:16.67px;line-height:20px;color:#fff;letter-spacing:-0.683px;">Host</span><span class="t" style="left:723.50px;top:565px;font-size:16.67px;line-height:20px;color:#fff;letter-spacing:0.670px;">(2)</span><span class="t" style="left:281.90px;top:586px;font-size:16.67px;line-height:20px;color:#fff;letter-spacing:-1.036px;">NOT</span><span class="t" style="left:320.00px;top:586px;font-size:16.67px;line-height:20px;color:#fff;letter-spacing:-1.274px;">FILLED</span><span class="t" style="left:515.60px;top:586px;font-size:16.67px;line-height:20px;color:#fff;letter-spacing:-0.422px;">Extraordinary</span><span class="t" style="left:615.60px;top:586px;font-size:16.67px;line-height:20px;color:#fff;letter-spacing:-0.602px;">Minister</span><span class="t" style="left:676.20px;top:586px;font-size:16.67px;line-height:20px;color:#fff;">-</span><span class="t" style="left:686.00px;top:586px;font-size:16.67px;line-height:20px;color:#fff;letter-spacing:-0.683px;">Host</span><span class="t" style="left:723.50px;top:586px;font-size:16.67px;line-height:20px;color:#fff;letter-spacing:0.670px;">(3)</span><span class="t" style="left:281.90px;top:607px;font-size:16.67px;line-height:20px;color:#fff;letter-spacing:-1.036px;">NOT</span><span class="t" style="left:320.00px;top:607px;font-size:16.67px;line-height:20px;color:#fff;letter-spacing:-1.274px;">FILLED</span><span class="t" style="left:515.60px;top:607px;font-size:16.67px;line-height:20px;color:#fff;letter-spacing:-0.928px;">Reader</span><span class="t" style="left:570.80px;top:607px;font-size:16.67px;line-height:20px;color:#fff;letter-spacing:0.420px;">(1)</span><span class="t" style="left:281.90px;top:628px;font-size:16.67px;line-height:20px;color:#fff;letter-spacing:-1.036px;">NOT</span><span class="t" style="left:320.00px;top:628px;font-size:16.67px;line-height:20px;color:#fff;letter-spacing:-1.274px;">FILLED</span><span class="t" style="left:515.60px;top:628px;font-size:16.67px;line-height:20px;color:#fff;letter-spacing:-0.928px;">Reader</span><span class="t" style="left:570.80px;top:628px;font-size:16.67px;line-height:20px;color:#fff;letter-spacing:0.420px;">(2)</span><span class="t" style="left:281.90px;top:649px;font-size:16.67px;line-height:20px;color:#fff;letter-spacing:-1.036px;">NOT</span><span class="t" style="left:320.00px;top:649px;font-size:16.67px;line-height:20px;color:#fff;letter-spacing:-1.274px;">FILLED</span><span class="t" style="left:515.60px;top:649px;font-size:16.67px;line-height:20px;color:#fff;letter-spacing:-0.892px;">Server</span><span class="t" style="left:281.90px;top:670px;font-size:16.67px;line-height:20px;color:#fff;letter-spacing:-1.036px;">NOT</span><span class="t" style="left:320.00px;top:670px;font-size:16.67px;line-height:20px;color:#fff;letter-spacing:-1.274px;">FILLED</span><span class="t" style="left:515.60px;top:670px;font-size:16.67px;line-height:20px;color:#fff;letter-spacing:-0.892px;">Server</span><span class="t" style="left:281.90px;top:691px;font-size:16.67px;line-height:20px;color:#fff;letter-spacing:-1.036px;">NOT</span><span class="t" style="left:320.00px;top:691px;font-size:16.67px;line-height:20px;color:#fff;letter-spacing:-1.274px;">FILLED</span><span class="t" style="left:515.60px;top:691px;font-size:16.67px;line-height:20px;color:#fff;letter-spacing:-0.419px;">Nursery</span><span class="t" style="left:281.90px;top:712px;font-size:16.67px;line-height:20px;color:#fff;letter-spacing:-1.036px;">NOT</span><span class="t" style="left:320.00px;top:712px;font-size:16.67px;line-height:20px;color:#fff;letter-spacing:-1.274px;">FILLED</span><span class="t" style="left:515.60px;top:712px;font-size:16.67px;line-height:20px;color:#fff;letter-spacing:-0.478px;">Counter</span><span class="t" style="left:259.20px;top:754px;font-size:16.67px;line-height:20px;color:#000;letter-spacing:0.009px;">Sunday, Apr 1, 9:00 AM:</span><span class="t" style="left:444.40px;top:754px;font-size:16.67px;line-height:20px;color:#000;letter-spacing:-0.689px;">Easter Sunday</span><span class="t" style="left:281.90px;top:775px;font-size:16.67px;line-height:20px;color:#a3b596;letter-spacing:-1.036px;">NOT</span><span class="t" style="left:320.00px;top:775px;font-size:16.67px;line-height:20px;color:#a3b596;letter-spacing:-1.274px;">FILLED</span><span class="t" style="left:515.70px;top:775px;font-size:16.67px;line-height:20px;color:#000;letter-spacing:-0.334px;">Hospitality</span><span class="t" style="left:594.50px;top:775px;font-size:16.67px;line-height:20px;color:#000;letter-spacing:0.548px;">(A)</span><span class="t" style="left:281.90px;top:796px;font-size:16.67px;line-height:20px;color:#a3b596;letter-spacing:-1.036px;">NOT</span><span class="t" style="left:320.00px;top:796px;font-size:16.67px;line-height:20px;color:#a3b596;letter-spacing:-1.274px;">FILLED</span><span class="t" style="left:515.70px;top:796px;font-size:16.67px;line-height:20px;color:#000;letter-spacing:-0.334px;">Hospitality</span><span class="t" style="left:594.50px;top:796px;font-size:16.67px;line-height:20px;color:#000;letter-spacing:-0.452px;">(B)</span><span class="t" style="left:281.90px;top:817px;font-size:16.67px;line-height:20px;color:#a3b596;letter-spacing:-1.036px;">NOT</span><span class="t" style="left:320.00px;top:817px;font-size:16.67px;line-height:20px;color:#a3b596;letter-spacing:-1.274px;">FILLED</span><span class="t" style="left:515.70px;top:817px;font-size:16.67px;line-height:20px;color:#000;letter-spacing:-0.334px;">Hospitality</span><span class="t" style="left:594.50px;top:817px;font-size:16.67px;line-height:20px;color:#000;letter-spacing:-0.363px;">(C)</span><span class="t" style="left:281.90px;top:838px;font-size:16.67px;line-height:20px;color:#a3b596;letter-spacing:-1.036px;">NOT</span><span class="t" style="left:320.00px;top:838px;font-size:16.67px;line-height:20px;color:#a3b596;letter-spacing:-1.274px;">FILLED</span><span class="t" style="left:515.70px;top:838px;font-size:16.67px;line-height:20px;color:#000;letter-spacing:-0.334px;">Hospitality</span><span class="t" style="left:594.50px;top:838px;font-size:16.67px;line-height:20px;color:#000;letter-spacing:0.137px;">(D)</span><div style="left:901px;top:118px;width:23px;height:739px;background:#f0f0f0;"></div><div style="left:901px;top:142px;width:22px;height:262px;background:#cdcdcd;"></div><svg style="left:901px;top:118px" width="22" height="24" viewBox="0 0 22 24"><path d="M7.4 14.1 L11.6 9.5 L15.8 14.1" stroke="#555" stroke-width="2.3" fill="none"/></svg><svg style="left:901px;top:835px" width="22" height="22" viewBox="0 0 22 22"><path d="M7.4 10.9 L11.6 15.5 L15.8 10.9" stroke="#555" stroke-width="2.3" fill="none"/></svg><div style="left:924px;top:118px;width:1px;height:739px;background:#9c9ca6;"></div><div style="left:925px;top:118px;width:273px;height:739px;background:#f8f7ef;"></div><div style="left:925px;top:231px;width:273px;height:536px;background:#fcfbf7;"></div><div style="left:925px;top:230px;width:273px;height:1px;background:#a7abb8;"></div><div style="left:925px;top:767px;width:273px;height:1px;background:#a7a7a7;"></div><span class="t" style="left:932.60px;top:133px;font-size:16.67px;line-height:20px;color:#000;letter-spacing:-0.674px;">Mode:</span><div style="left:984px;top:127px;width:208px;height:29px;background:#e1e1e1;border:1px solid #adadad;"></div><span class="t" style="left:989.20px;top:133px;font-size:16.67px;line-height:20px;color:#000;letter-spacing:-0.235px;">Fill positions</span><svg style="left:1168px;top:134px" width="18" height="16" viewBox="0 0 18 16"><path d="M3.5 5.5 L9 11 L14.5 5.5" stroke="#444" stroke-width="1.2" fill="none"/></svg><div style="left:933px;top:167px;width:19px;height:19px;background:#fff;border:1px solid #333;"></div><svg style="left:933px;top:167px" width="19" height="19" viewBox="0 0 19 19"><path d="M4 10 L7.5 13.5 L15.5 5.5" stroke="#222" stroke-width="1.3" fill="none"/></svg><span class="t" style="left:959.50px;top:166px;font-size:16.67px;line-height:20px;color:#000;letter-spacing:-0.192px;">Show only volunteers who...</span><div style="left:933px;top:197px;width:19px;height:19px;background:#fff;border:1px solid #333;"></div><span class="t" style="left:959.50px;top:196px;font-size:16.67px;line-height:20px;color:#000;letter-spacing:-0.135px;">Sort by load:</span><span class="t" style="left:1058.70px;top:196px;font-size:16.67px;line-height:20px;color:#a9a9a9;letter-spacing:-0.211px;">Ministry</span><span class="t" style="left:1136.60px;top:196px;font-size:16.67px;line-height:20px;color:#a9a9a9;letter-spacing:0.378px;">Total</span><svg style="left:1098px;top:217px" width="56" height="10" viewBox="0 0 56 10"><path d="M3.8 1.2 H9 L6.4 9 Z M44 1.2 H49.2 L46.6 9 Z" fill="#c4c4c4"/></svg><span class="t" style="left:961.30px;top:262px;font-size:16.67px;line-height:20px;color:#959595;letter-spacing:-0.349px;">Select a position to see a</span><span class="t" style="left:973.30px;top:283px;font-size:16.67px;line-height:20px;color:#959595;letter-spacing:-0.102px;">list of volunteers who</span><span class="t" style="left:979.30px;top:304px;font-size:16.67px;line-height:20px;color:#959595;letter-spacing:-0.086px;">can fill that position.</span><span class="t" style="left:956.20px;top:787px;font-size:16.67px;line-height:20px;color:#8a8a8a;letter-spacing:-0.185px;">Drag and drop or double click</span><span class="t" style="left:956.20px;top:808px;font-size:16.67px;line-height:20px;color:#8a8a8a;letter-spacing:-0.144px;">volunteers in the above list to</span><span class="t" style="left:993.90px;top:829px;font-size:16.67px;line-height:20px;color:#8a8a8a;letter-spacing:-0.026px;">fill empty positions.</span><div style="left:89px;top:70px;width:336px;height:444px;background:#f2f2f2;border:1px solid #cfcfcf;box-shadow:2px 2px 2px rgba(0,0,0,0.5);"></div><div style="left:90px;top:71px;width:45px;height:442px;background:#f0f0f0;"></div><div style="left:94px;top:240px;width:326px;height:29px;background:#91c9f7;"></div><div style="left:136px;top:138px;width:284px;height:1px;background:#d7d7d7;"></div><div style="left:136px;top:273px;width:284px;height:1px;background:#d7d7d7;"></div><div style="left:136px;top:438px;width:284px;height:1px;background:#d7d7d7;"></div><span class="t" style="left:141.40px;top:78px;font-size:16.67px;line-height:20px;color:#000;letter-spacing:-0.810px;">Commence</span><span class="t" style="left:225.50px;top:78px;font-size:16.67px;line-height:20px;color:#000;letter-spacing:-0.318px;">Scheduling...</span><span class="t" style="left:141.40px;top:108px;font-size:16.67px;line-height:20px;color:#000;letter-spacing:-0.471px;">Convert</span><span class="t" style="left:201.50px;top:108px;font-size:16.67px;line-height:20px;color:#000;letter-spacing:-0.733px;">Skeleton</span><span class="t" style="left:265.60px;top:108px;font-size:16.67px;line-height:20px;color:#000;">to</span><span class="t" style="left:285.00px;top:108px;font-size:16.67px;line-height:20px;color:#000;letter-spacing:-0.434px;">Schedule...</span><span class="t" style="left:141.40px;top:153px;font-size:16.67px;line-height:20px;color:#000;letter-spacing:-0.964px;">New</span><span class="t" style="left:177.80px;top:153px;font-size:16.67px;line-height:20px;color:#000;letter-spacing:-0.449px;">Service...</span><span class="t" style="left:141.40px;top:183px;font-size:16.67px;line-height:20px;color:#000;letter-spacing:-0.801px;">Edit</span><span class="t" style="left:173.20px;top:183px;font-size:16.67px;line-height:20px;color:#000;letter-spacing:-0.404px;">Service...</span><span class="t" style="left:141.40px;top:213px;font-size:16.67px;line-height:20px;color:#000;letter-spacing:-0.801px;">Edit</span><span class="t" style="left:173.20px;top:213px;font-size:16.67px;line-height:20px;color:#000;letter-spacing:-0.908px;">Service</span><span class="t" style="left:228.50px;top:213px;font-size:16.67px;line-height:20px;color:#000;letter-spacing:-0.322px;">Plan...</span><span class="t" style="left:141.40px;top:243px;font-size:16.67px;line-height:20px;color:#000;letter-spacing:-1.051px;">Delete</span><span class="t" style="left:189.50px;top:243px;font-size:16.67px;line-height:20px;color:#000;letter-spacing:-0.449px;">Service...</span><span class="t" style="left:141.40px;top:288px;font-size:16.67px;line-height:20px;color:#000;letter-spacing:-1.035px;">Flag</span><span class="t" style="left:174.00px;top:288px;font-size:16.67px;line-height:20px;color:#000;">as</span><span class="t" style="left:141.40px;top:318px;font-size:16.67px;line-height:20px;color:#000;letter-spacing:-0.903px;">Clear</span><span class="t" style="left:182.90px;top:318px;font-size:16.67px;line-height:20px;color:#000;letter-spacing:-1.035px;">Flag</span><span class="t" style="left:141.40px;top:348px;font-size:16.67px;line-height:20px;color:#000;letter-spacing:-0.903px;">Clear</span><span class="t" style="left:182.90px;top:348px;font-size:16.67px;line-height:20px;color:#000;letter-spacing:-0.586px;">all</span><span class="t" style="left:203.00px;top:348px;font-size:16.67px;line-height:20px;color:#000;letter-spacing:-0.347px;">flags</span><span class="t" style="left:242.50px;top:348px;font-size:16.67px;line-height:20px;color:#000;">in</span><span class="t" style="left:258.60px;top:348px;font-size:16.67px;line-height:20px;color:#000;letter-spacing:-0.406px;">schedule...</span><span class="t" style="left:141.40px;top:378px;font-size:16.67px;line-height:20px;color:#000;letter-spacing:-0.826px;">Remove</span><span class="t" style="left:203.90px;top:378px;font-size:16.67px;line-height:20px;color:#000;letter-spacing:-0.586px;">all</span><span class="t" style="left:224.30px;top:378px;font-size:16.67px;line-height:20px;color:#000;letter-spacing:0.021px;">&quot;Auto&quot;</span><span class="t" style="left:276.00px;top:378px;font-size:16.67px;line-height:20px;color:#000;letter-spacing:-0.407px;">assignments...</span><span class="t" style="left:141.40px;top:408px;font-size:16.67px;line-height:20px;color:#000;letter-spacing:-0.437px;">View</span><span class="t" style="left:180.50px;top:408px;font-size:16.67px;line-height:20px;color:#000;letter-spacing:-0.410px;">Sign-in</span><span class="t" style="left:236.40px;top:408px;font-size:16.67px;line-height:20px;color:#000;letter-spacing:-0.834px;">Kiosk</span><span class="t" style="left:279.00px;top:408px;font-size:16.67px;line-height:20px;color:#000;letter-spacing:-0.376px;">check-ins...</span><span class="t" style="left:141.40px;top:453px;font-size:16.67px;line-height:20px;color:#000;letter-spacing:-0.564px;">Scheduler</span><span class="t" style="left:215.90px;top:453px;font-size:16.67px;line-height:20px;color:#000;letter-spacing:-0.298px;">Settings...</span><span class="t" style="left:141.40px;top:483px;font-size:16.67px;line-height:20px;color:#000;letter-spacing:-0.858px;">Service</span><span class="t" style="left:195.80px;top:483px;font-size:16.67px;line-height:20px;color:#000;letter-spacing:-0.261px;">Naming</span><span class="t" style="left:255.90px;top:483px;font-size:16.67px;line-height:20px;color:#000;letter-spacing:-0.298px;">Settings...</span><svg style="left:400px;top:287px" width="16" height="26" viewBox="0 0 16 26"><path d="M4.3 2.3 L12.2 13.5 L4.3 24.7" stroke="#2b2b2b" stroke-width="1.8" fill="none"/></svg></body></html>
